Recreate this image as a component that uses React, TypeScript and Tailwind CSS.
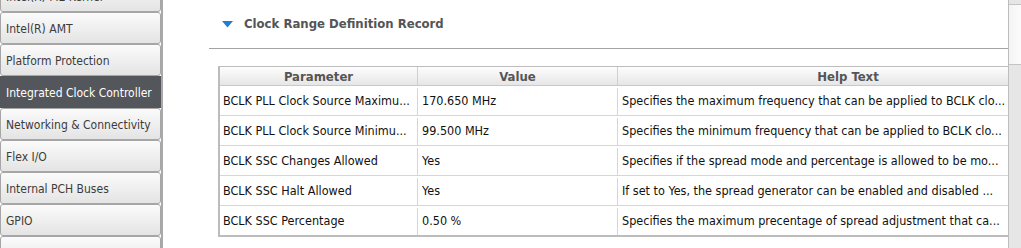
import React from "react";

const navItems = [
  "Intel(R) ME Kernel",
  "Intel(R) AMT",
  "Platform Protection",
  "Integrated Clock Controller",
  "Networking & Connectivity",
  "Flex I/O",
  "Internal PCH Buses",
  "GPIO",
  "",
];

const rows = [
  ["BCLK PLL Clock Source Maximu...", "170.650 MHz", "Specifies the maximum frequency that can be applied to BCLK clo..."],
  ["BCLK PLL Clock Source Minimu...", "99.500 MHz", "Specifies the minimum frequency that can be applied to BCLK clo..."],
  ["BCLK SSC Changes Allowed", "Yes", "Specifies if the spread mode and percentage is allowed to be mo..."],
  ["BCLK SSC Halt Allowed", "Yes", "If set to Yes, the spread generator can be enabled and disabled ..."],
  ["BCLK SSC Percentage", "0.50 %", "Specifies the maximum precentage of spread adjustment that ca..."],
];

export default function App() {
  return (
    <div
      className="flex h-[248px] w-[1021px] overflow-hidden bg-white text-[12px] [font-stretch:condensed]"
      style={{ fontFamily: '"DejaVu Sans", Tahoma, sans-serif' }}
    >
      {/* Sidebar */}
      <div className="w-[163px] shrink-0 border-r-2 border-[#a9a9a9]">
        <div className="-mt-[20px] flex flex-col">
          {navItems.map((item, i) => {
            const active = item === "Integrated Clock Controller";
            return (
              <div
                key={i}
                className={
                  active
                    ? "flex h-[32px] items-center whitespace-nowrap bg-[#53565b] pl-[6px] pt-[2px] text-white"
                    : "flex h-[32px] items-center whitespace-nowrap rounded-[3px] border border-[#a6a6a6] bg-gradient-to-b from-[#fbfbfb] to-[#e4e4e4] pl-[5px] pt-[2px] text-[#3c3c3c]"
                }
              >
                {item}
              </div>
            );
          })}
        </div>
      </div>

      {/* Main */}
      <div className="min-w-0 flex-1 overflow-hidden pl-[46px]">
        <div className="flex h-[49px] items-center border-b border-[#a3a3a3] pl-[13px]">
          <svg width="11" height="7" viewBox="0 0 11 7" className="mr-[11px]">
            <polygon points="0,0 11,0 5.5,6.5" fill="#1f7fd6" />
          </svg>
          <span className="text-[13px] font-bold text-[#555]">Clock Range Definition Record</span>
        </div>

        <div className="ml-[9px] mt-[17px] w-[870px] border-b-2 border-l-2 border-t border-[#bcbcbc] text-[12.5px]">
          <div className="flex h-[19px] border-b border-[#c9c9c9] bg-gradient-to-b from-[#fdfdfd] to-[#e6e6e6] text-[13px] font-bold text-[#555]">
            <div className="flex w-[198px] items-center justify-center border-r border-[#d0d0d0] pt-[1px]">Parameter</div>
            <div className="flex w-[200px] items-center justify-center border-r border-[#d0d0d0] pt-[1px]">Value</div>
            <div className="flex w-[460px] items-center justify-center pt-[1px]">Help Text</div>
          </div>
          {rows.map((r, i) => (
            <div
              key={i}
              className={
                i < rows.length - 1
                  ? "flex h-[30px] border-b border-[#d6d6d6] pt-[2px] text-[#111]"
                  : "flex h-[29px] pt-[2px] text-[#111]"
              }
            >
              <div className="flex w-[198px] items-center overflow-hidden whitespace-nowrap border-r border-[#d6d6d6] pl-[3px]">{r[0]}</div>
              <div className="flex w-[200px] items-center overflow-hidden whitespace-nowrap border-r border-[#d6d6d6] pl-[4px]">{r[1]}</div>
              <div className="flex w-[460px] items-center overflow-hidden whitespace-nowrap pl-[4px]">{r[2]}</div>
            </div>
          ))}
        </div>
      </div>

      {/* Scrollbar */}
      <div className="flex w-[13px] shrink-0 flex-col border-l border-[#bdbdbd] bg-[#e6e6e6]">
        <div className="h-[4px]" />
        <div className="h-[61px] border-y border-[#c4c4c4] bg-gradient-to-r from-[#f4f4f4] to-[#fbfbfb]" />
      </div>
    </div>
  );
}
